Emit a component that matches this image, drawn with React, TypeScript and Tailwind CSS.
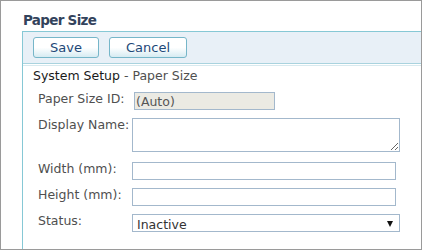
import React from "react";

const FONT = "font-['DejaVu_Sans',Verdana,sans-serif]";

function ToolButton({ label, width }: { label: string; width: string }) {
  return (
    <button
      className={`${width} h-[21px] rounded-[3px] border border-[#76b6c9] bg-gradient-to-b from-white from-50% to-[#d6ebf2] text-[13px] leading-[19px] text-[#1d4878] text-center`}
    >
      {label}
    </button>
  );
}

function Row({
  label,
  children,
  className = "",
}: {
  label: string;
  children: React.ReactNode;
  className?: string;
}) {
  return (
    <div className={`flex items-start ${className}`}>
      <div className="w-[94px] shrink-0 -mt-[1px] leading-[15px] text-[#4f4f4f]">
        {label}
      </div>
      {children}
    </div>
  );
}

export default function App() {
  return (
    <div
      className={`${FONT} w-[422px] h-[250px] border border-[#9a9a9a] bg-white overflow-hidden flex flex-col text-[12.5px]`}
    >
      {/* Page title */}
      <div className="h-[30px] pl-[22px] pt-[11px] text-[13.5px] leading-[16px] font-bold text-[#33435c] tracking-[-0.7px]">
        Paper Size
      </div>

      {/* Panel */}
      <div className="ml-[21px] flex-1 border-l border-t border-[#86c8d5] flex flex-col">
        {/* Toolbar */}
        <div className="h-[32px] bg-[#e8f0f7] border-b border-[#a9d3de] flex items-center pl-[10px] gap-[10px]">
          <ToolButton label="Save" width="w-[66px]" />
          <ToolButton label="Cancel" width="w-[78px]" />
        </div>
        <div className="mt-[1px] h-[1px] bg-[#d8eaef]" />

        {/* Form content */}
        <div className="pl-[10px]">
          <div className="mt-[2px] h-[15px] leading-[15px]">
            <span className="text-[#1a1a1a]">System Setup</span>
            <span className="text-[#4f4f4f]"> - Paper Size</span>
          </div>

          <div className="pl-[5px] mt-[9px] flex flex-col">
            <Row label="Paper Size ID:">
              <div className="ml-[2px] w-[141px] h-[18px] border border-[#a3b8cc] bg-[#ebeae3] pl-[1px] pt-[1px] leading-[15px] text-[#555]">
                (Auto)
              </div>
            </Row>

            <Row label="Display Name:" className="mt-[8px]">
              <textarea className="block w-[268px] h-[34px] border border-[#a3b8cc] bg-white outline-none resize" />
            </Row>

            <Row label="Width (mm):" className="mt-[10px]">
              <input className="block w-[264px] h-[18px] border border-[#a3b8cc] bg-white outline-none" />
            </Row>

            <Row label="Height (mm):" className="mt-[8px]">
              <input className="block w-[264px] h-[18px] border border-[#a3b8cc] bg-white outline-none" />
            </Row>

            <Row label="Status:" className="mt-[8px]">
              <div className="w-[268px] h-[18px] border border-[#a3b8cc] bg-white flex items-center justify-between pl-[4px] pr-[6px]">
                <span className="leading-[15px] pt-[2px] text-[#333]">Inactive</span>
                <svg width="6" height="6" viewBox="0 0 6 6" className="mt-[1px]">
                  <polygon points="0,0 6,0 3,6" fill="#111" />
                </svg>
              </div>
            </Row>
          </div>
        </div>
      </div>
    </div>
  );
}
